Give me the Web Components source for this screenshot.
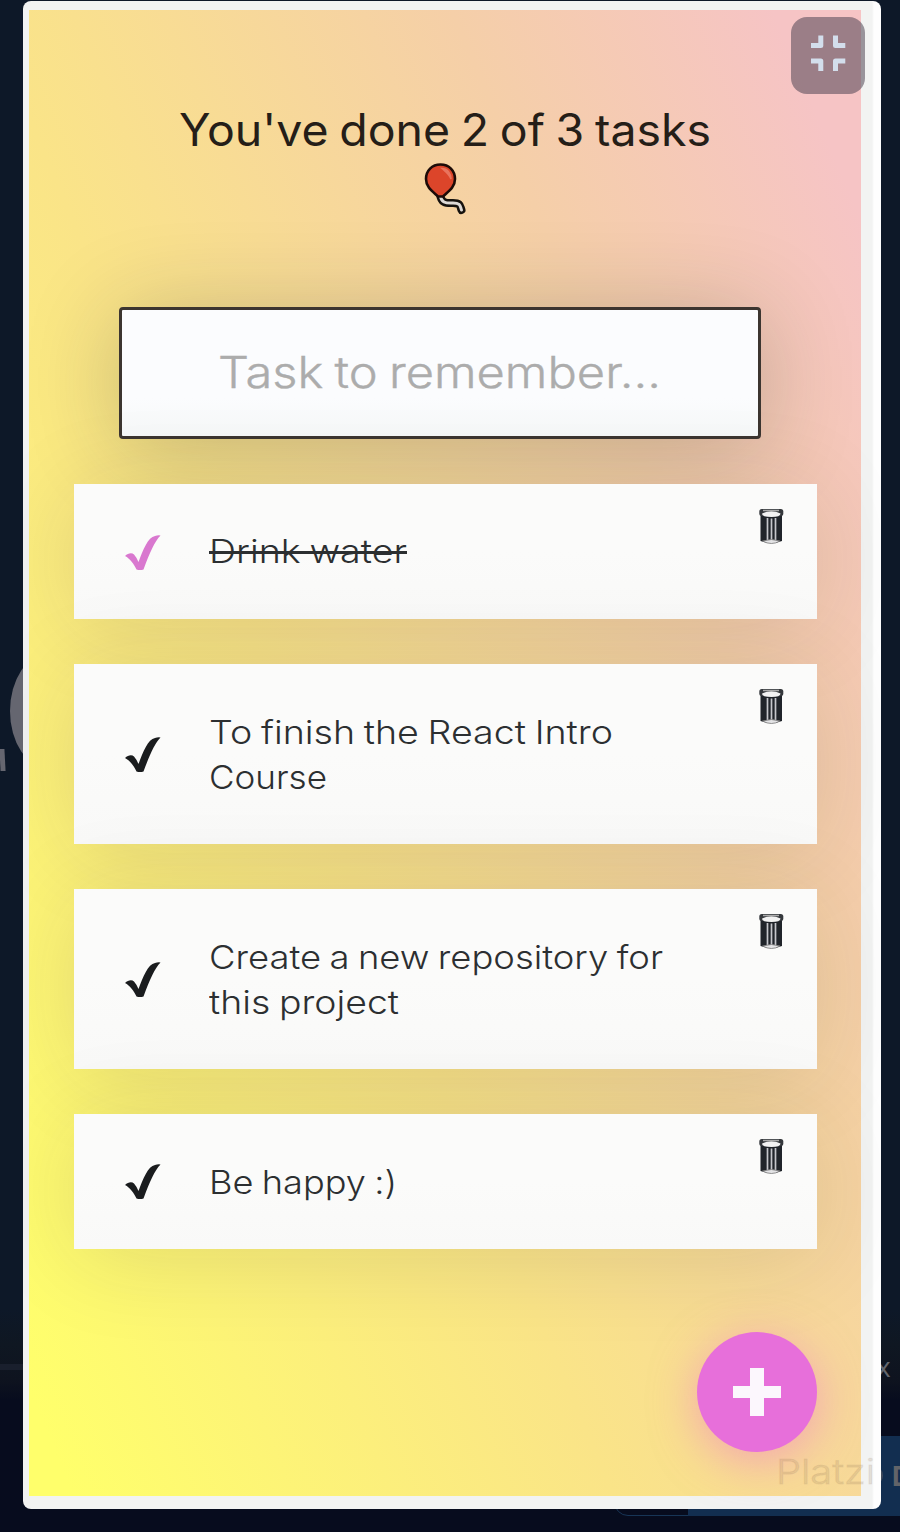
<!DOCTYPE html>
<html lang="en">
<head>
<meta charset="utf-8">
<title>Todo</title>
<style>
html,body{margin:0;height:100%;overflow:hidden;font-family:Inter,"Open Sans",sans-serif;background:#080d1f}
</style>
</head>
<body>
<app-stage>
  <todo-app>
    <todo-counter></todo-counter>
    <todo-input></todo-input>
    <todo-list>
      <todo-item done><fit-line w="198">Drink water</fit-line></todo-item>
      <todo-item><fit-line w="404">To finish the React Intro</fit-line><fit-line w="118">Course</fit-line></todo-item>
      <todo-item><fit-line w="454">Create a new repository for</fit-line><fit-line w="190">this project</fit-line></todo-item>
      <todo-item><fit-line w="188">Be happy :)</fit-line></todo-item>
    </todo-list>
    <add-button></add-button>
  </todo-app>
</app-stage>
<script>
const define = (name, html, after) => customElements.define(name, class extends HTMLElement {
  connectedCallback() {
    if (this.shadowRoot) return;
    const t = document.createElement('template');
    t.innerHTML = html;
    this.attachShadow({mode: 'open'}).append(t.content.cloneNode(true));
    if (after) after(this);
  }
});

define('app-stage', `<style>
  :host{display:block;position:relative;width:900px;height:1532px;overflow:hidden;
    background:linear-gradient(#0d1828 0,#0d1828 1310px,#0f1722 1345px,#0e131f 1380px,#070c1e 1400px,#070c1e 100%)}
  .ring,.tail,.rule,.x,.bar,.edge,.d,.arc{position:absolute}
  .ring{left:10px;top:654px;width:76px;height:114px;border-radius:50%;background:#656670}
  .tail{left:0;top:749px;width:5px;height:22px;background:#656670;transform:skewX(3deg)}
  .rule{left:0;top:1364px;width:30px;height:6px;background:#191f2d}
  .x{left:876px;top:1350px;font:28px/32px "Open Sans",sans-serif;color:#63666d}
  .bar{left:688px;top:1436px;width:212px;height:80px;background:#122e50}
  .edge{left:614px;top:1470px;width:90px;height:44px;border:1px solid #173556;border-radius:14px 0 0 14px;box-sizing:content-box}
  .arc{left:866px;top:1466px;width:17px;height:19px;border-radius:50%;border-right:3px solid #3f4a5c;box-sizing:border-box}
  .d{left:892px;top:1461px;font:bold 27px/32px Inter,sans-serif;color:#626469}
  .phone{position:absolute;left:23px;top:1px;width:858px;height:1508px;box-sizing:border-box;padding:9px 0 0 6px;
    border-radius:8px;overflow:hidden;background:linear-gradient(90deg,#f2f3f2 0 849px,#fefefe 851px)}
  .mark{position:absolute;left:776px;top:1451px;font:300 34px/42px Inter,sans-serif;color:rgba(150,120,90,.16);-webkit-text-stroke:1.200px rgba(150,120,90,.13)}
  .zoom{position:absolute;left:791px;top:17px;width:74px;height:77px;border-radius:16px;background:rgba(80,70,84,.55)}
  .zoom svg{display:block;margin:18px 0 0 20px}
</style>
<div class="ring"></div><div class="tail"></div><div class="rule"></div>
<div class="x">x</div><div class="edge"></div><div class="bar"></div><div class="arc"></div><div class="d">D</div>
<div class="phone"><slot></slot></div>
<div class="mark"><fit-line w="99">Platzi</fit-line></div>
<div class="zoom"><svg width="36" height="37" viewBox="0 0 36 37" fill="none" stroke="#d3deec" stroke-width="5" stroke-linejoin="round"><path d="M0 10.500H9.800V.5M24.500 .5V10.500H34.300M0 26H9.800V36M24.500 36V26H34.300"/></svg></div>`);

define('todo-app', `<style>
  :host{display:flex;flex-direction:column;position:relative;box-sizing:border-box;width:832px;height:1486px;
    background:linear-gradient(67deg,#ffff6b 3%,#fae488 40%,#f5cfa8 72%,#f6c4c5 94%)}
</style><slot></slot>`);

define('todo-counter', `<style>
  :host{display:flex;flex-direction:column;align-items:flex-start;height:297px;box-sizing:border-box;padding:92px 0 0 150px;
    color:#251e18;font-size:44.500px;line-height:56px}
  svg{display:block;margin:4px 0 0 244px}
</style>
<fit-line w="532">You've done 2 of 3 tasks</fit-line>
<svg width="44" height="54" viewBox="0 0 44 54"><path d="M17 32C18 42 24 41 30 41C38 41 37 44 38.500 48" fill="none" stroke="#16120e" stroke-width="8" stroke-linecap="round"/><path d="M17 32C18 42 24 41 30 41C38 41 37 44 38.500 48" fill="none" stroke="#ddd9d6" stroke-width="3" stroke-linecap="round"/><path d="M17.500 2.500C9 2.500 3 8.500 3 17C3 25 9 29 15 34.500H20C26 29 32 25 32 17C32 8.500 26 2.500 17.500 2.500Z" fill="#dc452a" stroke="#1d0b08" stroke-width="2.600"/><path d="M19 6.500C24 6.500 28 11 28 17C26 12 23 10 19 6.500Z" fill="#e9745e" stroke="#e9745e" stroke-width="1.500"/></svg>`);

define('todo-input', `<style>
  :host{display:flex;justify-content:flex-start;box-sizing:border-box;width:642px;height:132px;margin-left:90px;padding:34px 0 0 96px;
    border:3px solid #3c3530;border-radius:4px;background:linear-gradient(#fbfcfe 70%,#f6f8f8);
    box-shadow:0 9px 94px rgba(32,35,41,.23);color:#acacac;font-weight:300;font-size:43.500px;line-height:56px;-webkit-text-stroke:.4px #acacac}
</style><fit-line w="443">Task to remember...</fit-line>`);

define('todo-list', `<style>
  :host{display:flex;flex-direction:column;gap:45px;padding:45.400px 44px 0 45px}
</style><slot></slot>`);

define('todo-item', `<style>
  :host{display:grid;grid-template-columns:135px minmax(0,1fr) 58px;box-sizing:border-box;min-height:134.600px;
    background:linear-gradient(#fbfbfa 50%,#f9f9f8);
    box-shadow:0 9px 94px rgba(32,35,41,.12);color:#2c2f31}
  .check{align-self:center;display:block;margin:2px 0 0 51px;fill:#1a1c1e}
  :host([done]) .check{fill:#d978cf}
  .text{padding:46px 0 44px;font-size:33px;font-weight:300;line-height:45px}
  :host([done]) .text{padding:45px 0 44.600px;text-decoration:line-through;text-decoration-thickness:3px}
  .bin{display:block;margin-top:25px}
</style>
<svg class="check" width="36" height="36" viewBox="0 0 36 36"><path d="M0 21C3 18 7 17.500 9 19.500Q12 23 13.500 27C18 15 23 2 30 1Q33 0 35.500.5C30 6 25 17 18.500 34.500Q15 35.500 11.500 34.500C9 29 5 23.500 0 21Z"/></svg>
<div class="text"><slot></slot></div>
<svg class="bin" width="26" height="36" viewBox="0 0 26 36"><path d="M1.500 6V32Q13 36 23 32V6Z" fill="#20242a"/><path d="M8.500 9V31M12.500 9.500V32M16.500 9V31" stroke="#c5c6cb" stroke-width="1.700"/><path d="M3.500 32Q12.500 29 21 32Q12.500 37 3.500 32Z" fill="#e4e4e6" stroke="#777" stroke-width=".8"/><rect x=".3" y="0" width="24" height="7" rx="2.500" fill="#35383c"/><path d="M3 4.500Q12.500 0 21.500 4.500Q21.500 8 12.500 8Q3 8 3 4.500Z" fill="#f2f2f2"/><path d="M4 1.500H20" stroke="#aaa" stroke-width="1.500"/></svg>`);

define('add-button', `<style>
  :host{position:absolute;right:44px;bottom:44.500px;width:120px;height:120px;border-radius:50%;background:#e76fda;
    box-shadow:0 9px 46px rgba(240,110,210,.5);display:grid;place-items:center}
</style><svg width="50" height="50" viewBox="0 0 50 50"><path d="M18 1H32V19H49V31H32V49H18V31H1V19H18Z" fill="#fcf7fd"/></svg>`);

// One line of text, widened to fill the width given in its w attribute.
define('fit-line', `<style>
  :host{display:block;white-space:nowrap;transform-origin:0 50%;word-spacing:-.05em}
</style><span><slot></slot></span>`, el => {
  const span = el.shadowRoot.querySelector('span');
  el.style.transform = `scaleX(${el.getAttribute('w') / span.getBoundingClientRect().width})`;
});
</script>
</body>
</html>
